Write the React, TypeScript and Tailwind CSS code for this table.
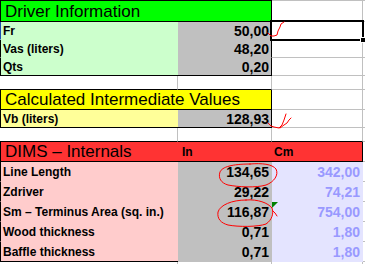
const font = "font-['Liberation_Sans',Arial,sans-serif]";

const colA = "w-[178px] shrink-0";
const colB = "w-[94px] shrink-0";
const colC = "w-[91px] shrink-0";
const colD = "w-[2px] shrink-0";
const grid = "border-[#c0c0c0]";

function Label({ children }: { children: React.ReactNode }) {
  return <span className="pl-[2px] text-[12px] font-bold leading-none">{children}</span>;
}

function Value({ children, className = "" }: { children: React.ReactNode; className?: string }) {
  return (
    <span className={`ml-auto pr-[2px] text-[14px] font-bold leading-none ${className}`}>{children}</span>
  );
}

function BlankRow({ bottom }: { bottom: string }) {
  return (
    <div className="flex h-[14px]">
      <div className={`${colA} border-r border-b ${grid} ${bottom}`} />
      <div className={`${colB} border-r border-b ${grid} ${bottom}`} />
      <div className={`${colC} border-r border-b ${grid}`} />
      <div className={`${colD} border-b ${grid}`} />
    </div>
  );
}

const driverRows = [
  { label: "Fr", value: "50,00" },
  { label: "Vas (liters)", value: "48,20" },
  { label: "Qts", value: "0,20" },
];

const dimsRows = [
  { label: "Line Length", inch: "134,65", cm: "342,00" },
  { label: "Zdriver", inch: "29,22", cm: "74,21" },
  { label: "Sm \u2013 Terminus Area (sq. in.)", inch: "116,87", cm: "754,00" },
  { label: "Wood thickness", inch: "0,71", cm: "1,80" },
  { label: "Baffle thickness", inch: "0,71", cm: "1,80" },
];

export default function App() {
  return (
    <div className={`relative h-[264px] w-[365px] overflow-hidden bg-white text-black ${font}`}>
      {/* Driver Information */}
      <div className="flex h-[22px]">
        <div className="flex w-[272px] shrink-0 items-center border border-black bg-[#00ff00] pl-[4px] text-[17px] leading-none">
          Driver Information
        </div>
        <div className={`${colC} border-t border-r border-b ${grid}`} />
        <div className={`${colD} border-t border-b ${grid}`} />
      </div>
      {driverRows.map((row, i) => {
        const last = i === driverRows.length - 1;
        return (
          <div key={row.label} className="flex h-[18px]">
            <div
              className={`${colA} flex items-center border-l border-b bg-[#ccffcc] ${
                i === 0 ? "border-l-[#1f4fb0]" : "border-l-black"
              } ${last ? "border-b-black" : "border-b-[#ccffcc]"}`}
            >
              <Label>{row.label}</Label>
            </div>
            <div
              className={`${colB} flex items-center border-r border-b border-r-black bg-[#c0c0c0] ${
                last ? "border-b-black" : "border-b-[#c0c0c0]"
              }`}
            >
              <Value>{row.value}</Value>
            </div>
            <div className={`${colC} border-r border-b ${grid}`} />
            <div className={`${colD} border-b ${grid}`} />
          </div>
        );
      })}
      <BlankRow bottom="border-b-black" />

      {/* Calculated Intermediate Values */}
      <div className="flex h-[20px]">
        <div className="flex w-[272px] shrink-0 items-center border-x border-b border-black bg-[#ffff00] pl-[4px] text-[17px] leading-none">
          Calculated Intermediate Values
        </div>
        <div className={`${colC} border-r border-b ${grid}`} />
        <div className={`${colD} border-b ${grid}`} />
      </div>
      <div className="flex h-[18px]">
        <div className={`${colA} flex items-center border-l border-b border-black bg-[#ffff99]`}>
          <Label>Vb (liters)</Label>
        </div>
        <div className={`${colB} flex items-center border-r border-b border-black bg-[#c0c0c0]`}>
          <Value>128,93</Value>
        </div>
        <div className={`${colC} border-r border-b ${grid}`} />
        <div className={`${colD} border-b ${grid}`} />
      </div>
      <div className="flex h-[14px]">
        <div className={`${colA} border-r border-b ${grid} border-b-black`} />
        <div className={`${colB} border-r border-b ${grid} border-b-black`} />
        <div className={`${colC} border-r border-b ${grid} border-b-black`} />
        <div className={`${colD} border-b ${grid}`} />
      </div>

      {/* DIMS – Internals */}
      <div className="flex h-[20px]">
        <div className={`${colA} flex items-center border-l border-b border-black bg-[#ff3333] pl-[4px] text-[17px] leading-none`}>
          DIMS &ndash; Internals
        </div>
        <div className={`${colB} flex items-center border-b border-black bg-[#ff3333] pl-[4px] text-[12px] font-bold leading-none`}>
          In
        </div>
        <div className={`${colC} flex items-center border-r border-b border-black bg-[#ff3333] pl-[2px] text-[12px] font-bold leading-none`}>
          Cm
        </div>
        <div className={`${colD} border-b ${grid}`} />
      </div>
      {dimsRows.map((row, i) => {
        const last = i === dimsRows.length - 1;
        return (
          <div key={row.label} className="flex h-[20px]">
            <div
              className={`${colA} flex items-center border-l border-b border-l-black bg-[#ffcccc] ${
                last ? "border-b-black" : "border-b-[#ffcccc]"
              }`}
            >
              <Label>{row.label}</Label>
            </div>
            <div
              className={`${colB} flex items-center border-b bg-[#c0c0c0] ${
                last ? "border-b-[#c0c0c0]" : "border-b-[#c0c0c0]"
              }`}
            >
              <Value className="pr-[3px]">{row.inch}</Value>
            </div>
            <div className={`${colC} flex items-center border-r border-b border-[#e4e4ff] bg-[#e4e4ff]`}>
              <Value className="pr-[1px] text-[#9999ff]">{row.cm}</Value>
            </div>
            <div className={`${colD} border-b ${grid}`} />
          </div>
        );
      })}
      <div className="flex h-[2px]">
        <div className={`${colA} border-r ${grid}`} />
        <div className={`${colB} border-r ${grid}`} />
        <div className={`${colC} border-r ${grid}`} />
      </div>

      {/* active cell selection */}
      <div className="absolute left-[270px] top-[20px] h-[21px] w-[94px] border-2 border-black" />
      <div className="absolute left-[360px] top-[37px] h-[6px] w-[6px] border border-white bg-black" />

      {/* hand-drawn review marks */}
      <svg className="pointer-events-none absolute left-0 top-0" width="365" height="264" viewBox="0 0 365 264">
        <g fill="none" stroke="#ff0000" strokeWidth="1" strokeLinejoin="round" strokeLinecap="round">
          <polyline points="268,33 271,36 274,36 277,35 278,31 280,27 281,24 284,22" />
          <polyline points="268,123 271,126 274,127 279,128 282,125 284,120 286,114" />
          <polyline points="280,128 284,125 287,123 289,120 291,118" />
          <path d="M250,164 C262,163 272,164 276,169 C279,175 274,182 266,185 C256,188 238,187 228,185 C221,183 218,178 220,172 C222,167 232,164 250,164 Z" />
          <path d="M246,200 C258,199 268,203 272,208 C274,213 272,220 266,224 C258,227 238,227 228,225 C221,223 217,219 218,212 C220,205 232,200 246,200 Z" />
          <polyline points="273,211 275,213 277,216" />
        </g>
        <polygon points="272,202 278,202 272,208" fill="#008000" />
      </svg>
    </div>
  );
}
